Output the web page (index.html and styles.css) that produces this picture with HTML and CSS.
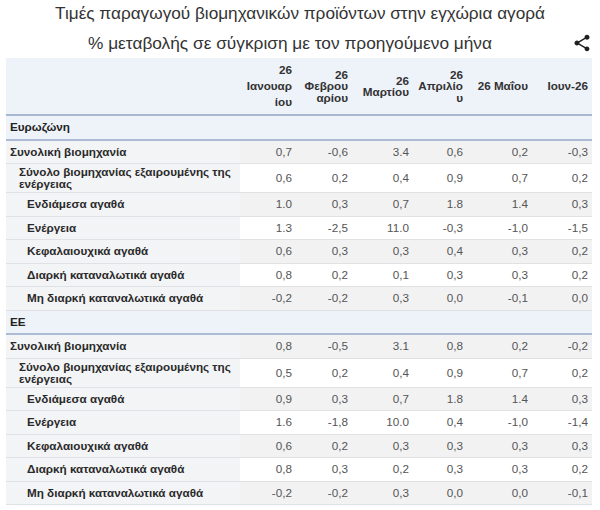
FILE: index.html
```html
<!DOCTYPE html>
<html lang="el">
<head>
<meta charset="utf-8">
<title>Τιμές παραγωγού</title>
<link rel="stylesheet" href="styles.css">
</head>
<body>
<div class="page">
  <div class="titles">
    <div class="title">Τιμές παραγωγού βιομηχανικών προϊόντων στην εγχώρια αγορά</div>
    <div class="subtitle-row">
      <div class="subtitle">% μεταβολής σε σύγκριση με τον προηγούμενο μήνα</div>
      <svg class="share" viewBox="0 0 24 24" width="20" height="20" aria-label="share"><path d="M18 16.08c-.76 0-1.44.3-1.96.77L8.91 12.7c.05-.23.09-.46.09-.7s-.04-.47-.09-.7l7.05-4.11c.54.5 1.25.81 2.040.81 1.66 0 3-1.34 3-3s-1.34-3-3-3-3 1.34-3 3c0 .24.04.47.09.7L8.04 9.81C7.5 9.31 6.79 9 6 9c-1.66 0-3 1.34-3 3s1.34 3 3 3c.79 0 1.5-.31 2.040-.81l7.12 4.16c-.05.21-.08.43-.08.65 0 1.61 1.31 2.920 2.920 2.920 1.610 0 2.920-1.31 2.920-2.920s-1.31-2.920-2.920-2.920z"/></svg>
    </div>
  </div>
  <div class="table-wrap">
    <table class="data-table">
      <colgroup>
        <col class="c-label"><col class="c-1"><col class="c-2"><col class="c-3"><col class="c-4"><col class="c-5"><col class="c-6">
      </colgroup>
      <thead>
        <tr class="head-row">
          <th class="label-cell"></th>
          <th class="tall">26<br>Ιανουαρ<br>ίου</th>
          <th>26<br>Φεβρου<br>αρίου</th>
          <th>26<br>Μαρτίου</th>
          <th>26<br>Απριλίο<br>υ</th>
          <th>26 Μαΐου</th>
          <th>Ιουν-26</th>
        </tr>
      </thead>
      <tbody>
        <tr class="group-row"><td colspan="7">Ευρωζώνη</td></tr>
        <tr class="odd"><td class="label-cell l0">Συνολική βιομηχανία</td><td>0,7</td><td>-0,6</td><td>3.4</td><td>0,6</td><td>0,2</td><td>-0,3</td></tr>
        <tr class="even"><td class="label-cell l1">Σύνολο βιομηχανίας εξαιρουμένης της ενέργειας</td><td>0,6</td><td>0,2</td><td>0,4</td><td>0,9</td><td>0,7</td><td>0,2</td></tr>
        <tr class="odd"><td class="label-cell l2">Ενδιάμεσα αγαθά</td><td>1.0</td><td>0,3</td><td>0,7</td><td>1.8</td><td>1.4</td><td>0,3</td></tr>
        <tr class="even"><td class="label-cell l2">Ενέργεια</td><td>1.3</td><td>-2,5</td><td>11.0</td><td>-0,3</td><td>-1,0</td><td>-1,5</td></tr>
        <tr class="odd"><td class="label-cell l2">Κεφαλαιουχικά αγαθά</td><td>0,6</td><td>0,3</td><td>0,3</td><td>0,4</td><td>0,3</td><td>0,2</td></tr>
        <tr class="even"><td class="label-cell l2">Διαρκή καταναλωτικά αγαθά</td><td>0,8</td><td>0,2</td><td>0,1</td><td>0,3</td><td>0,3</td><td>0,2</td></tr>
        <tr class="odd"><td class="label-cell l2">Μη διαρκή καταναλωτικά αγαθά</td><td>-0,2</td><td>-0,2</td><td>0,3</td><td>0,0</td><td>-0,1</td><td>0,0</td></tr>
        <tr class="group-row"><td colspan="7">ΕΕ</td></tr>
        <tr class="odd"><td class="label-cell l0">Συνολική βιομηχανία</td><td>0,8</td><td>-0,5</td><td>3.1</td><td>0,8</td><td>0,2</td><td>-0,2</td></tr>
        <tr class="even"><td class="label-cell l1">Σύνολο βιομηχανίας εξαιρουμένης της ενέργειας</td><td>0,5</td><td>0,2</td><td>0,4</td><td>0,9</td><td>0,7</td><td>0,2</td></tr>
        <tr class="odd"><td class="label-cell l2">Ενδιάμεσα αγαθά</td><td>0,9</td><td>0,3</td><td>0,7</td><td>1.8</td><td>1.4</td><td>0,3</td></tr>
        <tr class="even"><td class="label-cell l2">Ενέργεια</td><td>1.6</td><td>-1,8</td><td>10.0</td><td>0,4</td><td>-1,0</td><td>-1,4</td></tr>
        <tr class="odd"><td class="label-cell l2">Κεφαλαιουχικά αγαθά</td><td>0,6</td><td>0,2</td><td>0,3</td><td>0,3</td><td>0,3</td><td>0,3</td></tr>
        <tr class="even"><td class="label-cell l2">Διαρκή καταναλωτικά αγαθά</td><td>0,8</td><td>0,3</td><td>0,2</td><td>0,3</td><td>0,3</td><td>0,2</td></tr>
        <tr class="odd"><td class="label-cell l2">Μη διαρκή καταναλωτικά αγαθά</td><td>-0,2</td><td>-0,2</td><td>0,3</td><td>0,0</td><td>0,0</td><td>-0,1</td></tr>
      </tbody>
    </table>
  </div>
</div>
</body>
</html>
```
FILE: styles.css
```css
html, body {
  margin: 0;
  padding: 0;
  background: #ffffff;
}

.page {
  width: 600px;
  font-family: "Liberation Sans", Arial, sans-serif;
  color: #333333;
}

.titles {
  height: 58px;
}

.title {
  font-size: 17.2px;
  line-height: 26px;
  text-align: center;
  color: #333333;
}

.subtitle-row {
  display: flex;
  align-items: center;
  margin-top: 4px;
  height: 26px;
}

.subtitle {
  flex: 1;
  font-size: 17.3px;
  line-height: 26px;
  text-align: center;
  padding-left: 8px;
  color: #333333;
}

.share {
  width: 20px;
  height: 20px;
  margin-right: 8px;
  fill: #1f1f1f;
  flex: none;
}

.table-wrap {
  padding: 0 8px 0 6px;
}

.data-table {
  width: 586px;
  table-layout: fixed;
  border-collapse: collapse;
  font-size: 11.7px;
}

.c-label { width: 234px; }
.c-1 { width: 56px; }
.c-2 { width: 56px; }
.c-3 { width: 61px; }
.c-4 { width: 54px; }
.c-5 { width: 65px; }
.c-6 { width: 60px; }

.head-row th {
  height: 56px;
  padding: 0 4px;
  background: #eef2f9;
  border-bottom: 2px solid #a9b8d2;
  text-align: right;
  vertical-align: middle;
  font-weight: bold;
  line-height: 11.5px;
  color: #333333;
}

.head-row th.tall {
  line-height: 16px;
}

.group-row td {
  height: 22.5px;
  padding: 0 4px;
  background: #eef2f9;
  border-bottom: 2px solid #aebbd4;
  font-weight: bold;
  color: #222222;
  line-height: 12px;
  vertical-align: middle;
}

.odd td,
.even td {
  height: 18.5px;
  padding: 2px 4px;
  border-bottom: 1px solid #dfe1e5;
  text-align: right;
  vertical-align: middle;
  line-height: 12px;
  color: #555555;
}

.odd td {
  background: #f2f2f3;
}

.even td {
  background: #ffffff;
}

.odd td.label-cell,
.even td.label-cell {
  background: #f3f4f6;
  text-align: left;
  font-weight: bold;
  color: #2a2a2a;
}

.l0 { padding-left: 4px; }
.odd td.l1, .even td.l1 { padding-left: 13px; }
.odd td.l2, .even td.l2 { padding-left: 21px; }
```
